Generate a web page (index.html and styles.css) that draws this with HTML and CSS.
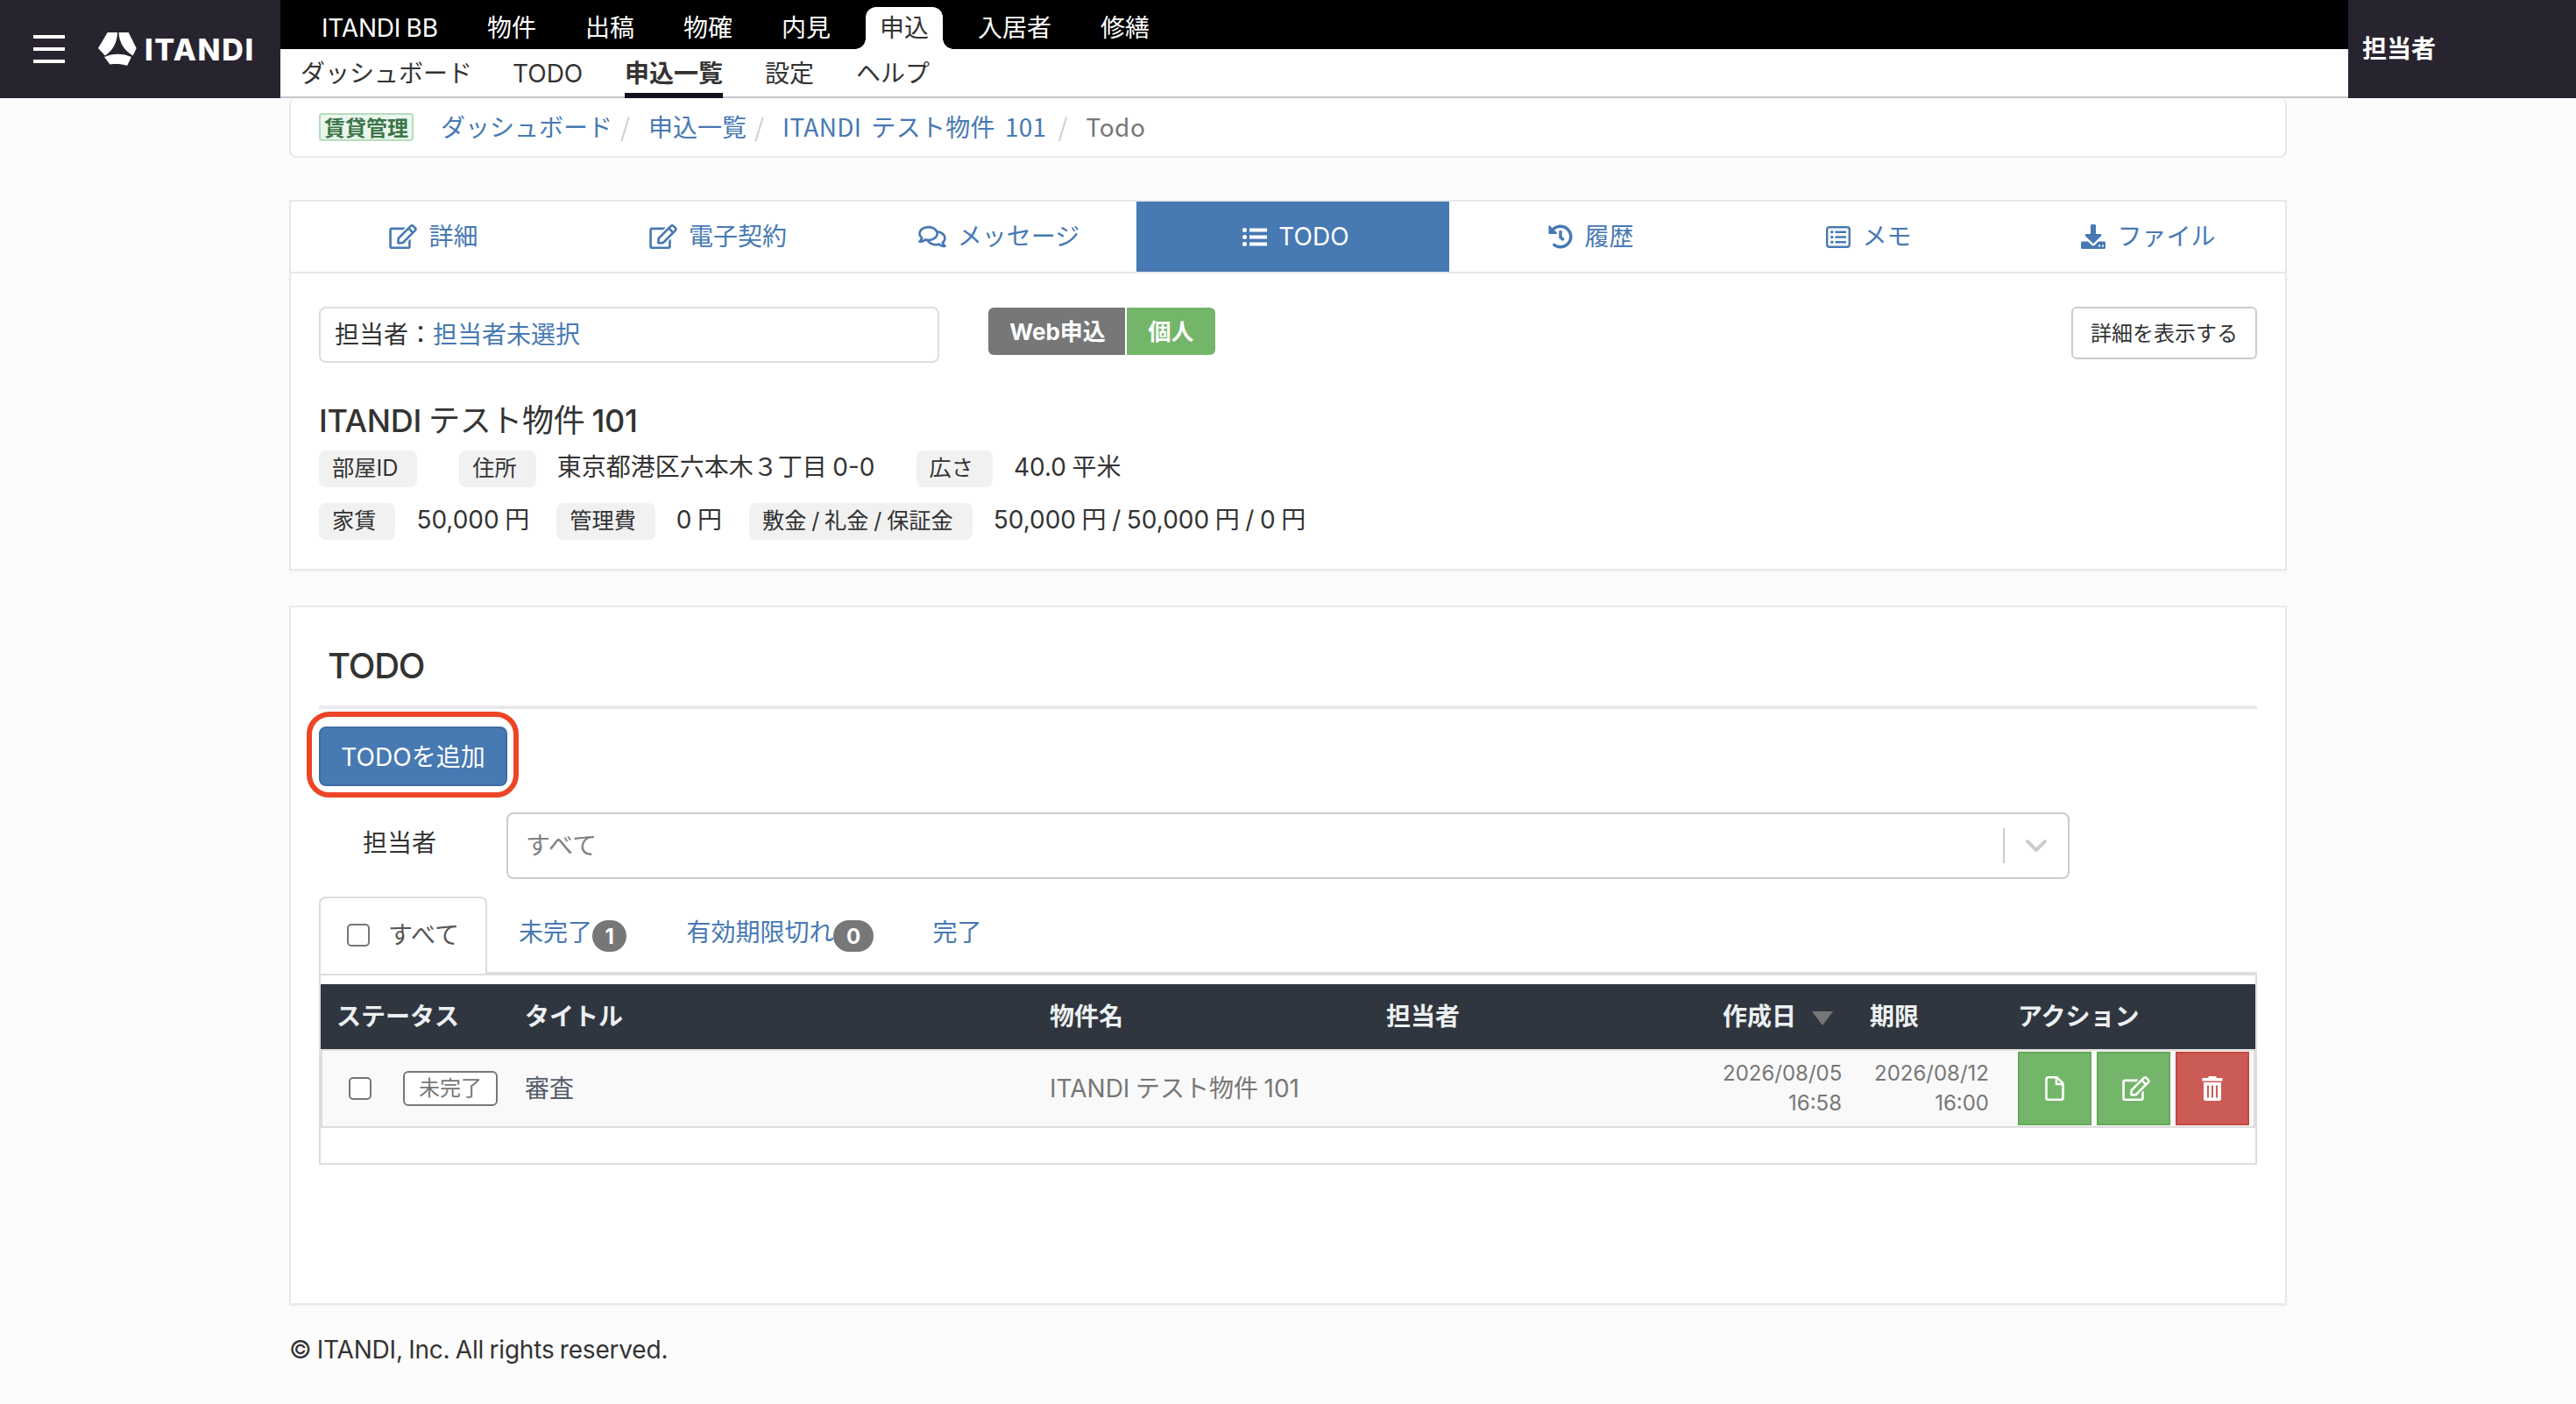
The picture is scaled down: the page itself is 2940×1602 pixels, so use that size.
FILE: index.html
```html
<!DOCTYPE html>
<html lang="ja">
<head>
    <meta charset="UTF-8">
    <title>TODO | ITANDI 申込</title>
    <link rel="stylesheet" href="styles.css">
</head>
<body>
    <svg class="sprite" aria-hidden="true">
        <symbol id="icon-edit" viewBox="0 0 576 512"><path d="M402.3 344.9l32-32c5-5 13.7-1.5 13.7 5.7V464c0 26.5-21.5 48-48 48H48c-26.5 0-48-21.5-48-48V112c0-26.5 21.5-48 48-48h273.5c7.1 0 10.7 8.6 5.7 13.7l-32 32c-1.5 1.5-3.5 2.3-5.7 2.3H48v352h352V350.5c0-2.1.8-4.1 2.3-5.6zm156.6-201.8L296.3 405.7l-90.4 10c-26.2 2.9-48.5-19.2-45.6-45.6l10-90.4L432.9 17.1c22.9-22.9 59.9-22.9 82.7 0l43.2 43.2c22.9 22.9 22.9 60 .1 82.8zM460.1 174L402 115.9 216.2 301.8l-7.3 65.3 65.3-7.3L460.1 174zm64.8-79.7l-43.2-43.2c-4.1-4.1-10.8-4.1-14.8 0L436 82l58.1 58.1 30.9-30.9c4-4.2 4-10.8-.1-14.9z"/></symbol>
        <symbol id="icon-comments" viewBox="0 0 576 512"><path d="M532 386.2c27.5-27.1 44-61.1 44-98.2 0-80-76.5-146.1-176.2-157.9C368.3 72.5 294.3 32 208 32 93.1 32 0 103.6 0 192c0 37 16.5 71 44 98.2-15.3 30.7-37.3 54.5-37.7 54.9-6.3 6.7-8.1 16.5-4.4 25 3.6 8.5 12 14 21.2 14 53.5 0 96.7-20.2 125.2-38.8 9.2 2.1 18.7 3.7 28.4 4.9C208.1 407.6 281.8 448 368 448c20.8 0 40.8-2.4 59.8-6.8C456.3 459.7 499.4 480 553 480c9.2 0 17.5-5.5 21.2-14 3.6-8.5 1.9-18.3-4.4-25-.4-.3-22.5-24.1-37.8-54.8zm-392.8-92.3L122.1 305c-14.1 9.1-28.5 16.3-43.1 21.4 2.7-4.7 5.4-9.7 8-14.8l15.5-31.1L77.7 256C64.2 242.6 48 220.7 48 192c0-60.7 73.3-112 160-112s160 51.3 160 112-73.3 112-160 112c-16.5 0-33-1.9-49-5.6l-19.8-4.5zM498.3 352l-24.7 24.4 15.5 31.1c2.6 5.1 5.3 10.1 8 14.8-14.6-5.1-29-12.3-43.1-21.4l-17.1-11.1-19.9 4.6c-16 3.7-32.5 5.6-49 5.6-54 0-102.2-20.1-131.3-49.7C338 339.5 416 272.9 416 192c0-3.4-.4-6.7-.7-10C479.7 196.5 528 238.8 528 288c0 28.7-16.2 50.6-29.7 64z"/></symbol>
        <symbol id="icon-list" viewBox="0 0 28 28"><path d="M8 4.500h20v4H8zM8 12.500h20v4H8zM8 20.500h20v4H8z"/><circle cx="2.500" cy="6.500" r="2.500"/><circle cx="2.500" cy="14.500" r="2.500"/><circle cx="2.500" cy="22.500" r="2.500"/></symbol>
        <symbol id="icon-history" viewBox="0 0 512 512"><path d="M504 255.531c.253 136.64-111.18 248.372-247.82 248.468-59.015.042-113.223-20.53-155.822-54.911-11.077-8.94-11.905-25.541-1.839-35.607l11.267-11.267c8.609-8.609 22.353-9.551 31.891-1.984C173.062 425.135 212.781 440 256 440c101.705 0 184-82.311 184-184 0-101.705-82.311-184-184-184-48.814 0-93.149 18.969-126.068 49.932l50.754 50.754c10.08 10.08 2.941 27.314-11.313 27.314H24c-8.837 0-16-7.163-16-16V38.627c0-14.254 17.234-21.393 27.314-11.314l49.372 49.372C129.209 34.136 189.552 8 256 8c136.81 0 247.747 110.78 248 247.531zm-180.912 78.784l9.823-12.63c8.138-10.463 6.253-25.542-4.21-33.679L288 256.349V152c0-13.255-10.745-24-24-24h-16c-13.255 0-24 10.745-24 24v135.651l65.409 50.874c10.463 8.137 25.541 6.253 33.679-4.21z"/></symbol>
        <symbol id="icon-list-alt" viewBox="0 0 28 28"><rect x="1.200" y="3.200" width="25.600" height="22.600" rx="2.500" fill="none" stroke="currentColor" stroke-width="2.400"/><path d="M10.500 7.500H23v2.500H10.500zM10.500 13.200H23v2.500H10.500zM10.500 18.900H23v2.500H10.500z"/><circle cx="6.800" cy="8.800" r="1.700"/><circle cx="6.800" cy="14.500" r="1.700"/><circle cx="6.800" cy="20.200" r="1.700"/></symbol>
        <symbol id="icon-download" viewBox="0 0 28 28"><path d="M11 1.500c0-.8.700-1.500 1.500-1.500h3c.8 0 1.500.7 1.500 1.500V11h5c1.200 0 1.800 1.400 1 2.200l-8.300 8.300a1 1 0 0 1-1.400 0L5 13.200c-.8-.8-.2-2.200 1-2.200h5z"/><path d="M1.500 19.500H8l4 4a2.800 2.800 0 0 0 4 0l4-4h6.500c.8 0 1.500.7 1.500 1.500v5.500c0 .8-.7 1.500-1.500 1.500h-25c-.8 0-1.500-.7-1.500-1.500V21c0-.8.700-1.500 1.500-1.500zM20 23.500v2h2v-2zM24 23.500v2h2v-2z" fill-rule="evenodd"/></symbol>
        <symbol id="icon-file" viewBox="0 0 28 28"><path d="M5.500 1.300h10.200l6.800 6.800v16.600a2 2 0 0 1-2 2h-15a2 2 0 0 1-2-2V3.300a2 2 0 0 1 2-2zM15 1.500V9h7.500" fill="none" stroke="currentColor" stroke-width="2.600" stroke-linejoin="round" transform="translate(1)"/></symbol>
        <symbol id="icon-trash" viewBox="0 0 28 28"><path d="M2.500 2h6.500l1-2h8l1 2h6.500v3.500h-23zM4 7h20v18.500a2.500 2.500 0 0 1-2.500 2.500h-15A2.500 2.500 0 0 1 4 25.500zM8 10.500v14h2v-14zM13 10.500v14h2v-14zM18 10.500v14h2v-14z" fill-rule="evenodd"/></symbol>
    </svg>

    <header class="header">
        <div class="brand">
            <div class="menu-icon"><span></span><span></span><span></span></div>
            <svg class="brand-mark" viewBox="0 0 44 38">
                <path d="M10.700 0H22c0 11-5 20-14 26.500L0 18z"/>
                <path d="M23.500 0h11.200l9 18-4 8.500C29 20 24 11 23.500 0z"/>
                <path d="M7 28c9-4.500 22-4.500 31 0l-5 10c-6-2-13-2.500-19.500-1.500z"/>
            </svg>
            <span class="brand-name">ITANDI</span>
        </div>
        <div class="navs">
            <nav class="main-nav">
                <a class="wide-item">ITANDI BB</a>
                <a>物件</a>
                <a>出稿</a>
                <a>物確</a>
                <a>内見</a>
                <a class="active">申込</a>
                <a>入居者</a>
                <a>修繕</a>
            </nav>
            <nav class="sub-nav">
                <a>ダッシュボード</a>
                <a class="latin">TODO</a>
                <a class="active">申込一覧</a>
                <a>設定</a>
                <a>ヘルプ</a>
            </nav>
        </div>
        <div class="user">担当者</div>
    </header>

    <main class="container">
        <div class="breadcrumb">
            <span class="role">賃貸管理</span>
            <a>ダッシュボード</a>
            <i>/</i>
            <a>申込一覧</a>
            <i>/</i>
            <a class="room">ITANDI テスト物件 101</a>
            <i>/</i>
            <span class="current">Todo</span>
        </div>

        <section class="card">
            <div class="card-tabs">
                <a><svg class="icon icon-wide"><use href="#icon-edit"/></svg>詳細</a>
                <a><svg class="icon icon-wide"><use href="#icon-edit"/></svg>電子契約</a>
                <a><svg class="icon icon-wide"><use href="#icon-comments"/></svg>メッセージ</a>
                <a class="active"><svg class="icon"><use href="#icon-list"/></svg>TODO</a>
                <a><svg class="icon"><use href="#icon-history"/></svg>履歴</a>
                <a><svg class="icon"><use href="#icon-list-alt"/></svg>メモ</a>
                <a><svg class="icon"><use href="#icon-download"/></svg>ファイル</a>
            </div>
            <div class="summary">
                <div class="summary-top">
                    <div class="assignee">担当者：<a>担当者未選択</a></div>
                    <div class="kind">
                        <span class="kind-web">Web申込</span>
                        <span class="kind-person">個人</span>
                    </div>
                    <button class="btn-default">詳細を表示する</button>
                </div>
                <h2>ITANDI <span>テスト物件</span> 101</h2>
                <div class="specs">
                    <span class="chip">部屋ID</span>
                    <span class="value empty"></span>
                    <span class="chip">住所</span>
                    <span class="value address">東京都港区六本木３丁目 0-0</span>
                    <span class="chip">広さ</span>
                    <span class="value">40.0 平米</span>
                </div>
                <div class="specs">
                    <span class="chip">家賃</span>
                    <span class="value">50,000 円</span>
                    <span class="chip">管理費</span>
                    <span class="value">0 円</span>
                    <span class="chip">敷金 / 礼金 / 保証金</span>
                    <span class="value">50,000 円 / 50,000 円 / 0 円</span>
                </div>
            </div>
        </section>

        <section class="card todo">
            <h1>TODO</h1>
            <button class="btn-primary">TODOを追加</button>
            <div class="filter">
                <label>担当者</label>
                <div class="select">
                    <span>すべて</span>
                    <svg class="chevron" viewBox="0 0 24 16"><path d="M2 3l10 10L22 3"/></svg>
                </div>
            </div>
            <div class="status-tabs">
                <a class="active"><span class="checkbox"></span>すべて</a>
                <a>未完了<b>1</b></a>
                <a>有効期限切れ<b>0</b></a>
                <a>完了</a>
            </div>
            <div class="panel">
                <div class="row head">
                    <div>ステータス</div>
                    <div>タイトル</div>
                    <div>物件名</div>
                    <div>担当者</div>
                    <div>作成日<span class="sort"></span></div>
                    <div>期限</div>
                    <div>アクション</div>
                </div>
                <div class="row item">
                    <div class="status"><span class="checkbox"></span><span class="badge">未完了</span></div>
                    <div class="title">審査</div>
                    <div>ITANDI テスト物件 101</div>
                    <div></div>
                    <div class="date">2026/08/05<br>16:58</div>
                    <div class="date">2026/08/12<br>16:00</div>
                    <div class="actions">
                        <button class="green"><svg class="icon"><use href="#icon-file"/></svg></button>
                        <button class="green"><svg class="icon icon-wide icon-shift"><use href="#icon-edit"/></svg></button>
                        <button class="red"><svg class="icon"><use href="#icon-trash"/></svg></button>
                    </div>
                </div>
            </div>
        </section>

        <footer>© ITANDI, Inc. All rights reserved.</footer>
    </main>
</body>
</html>
```
FILE: styles.css
```css
* {
    box-sizing: border-box;
}
body {
    margin: 0;
    background-color: #fcfcfc;
    color: #333;
    font-family: Inter, 'Noto Sans CJK JP', sans-serif;
    font-size: 28px;
    line-height: 40px;
    word-spacing: -1.3px;
}
a {
    color: #4779b3;
    text-decoration: none;
}
button {
    font-family: inherit;
    padding: 0;
}
.sprite {
    display: none;
}
.icon {
    width: 28px;
    height: 28px;
    fill: currentColor;
    flex: none;
}
.icon-wide {
    width: 32px;
}
.icon-shift {
    margin-left: 6px;
}

/* header */
.header {
    display: flex;
    height: 112px;
}
.brand {
    display: flex;
    align-items: center;
    width: 320px;
    padding-left: 38px;
    background-color: #28242f;
    color: #fff;
}
.menu-icon {
    display: flex;
    flex-direction: column;
    gap: 10px;
    width: 36px;
}
.menu-icon span {
    height: 4px;
    background-color: #fff;
}
.brand-mark {
    width: 44px;
    height: 38px;
    margin: 0 9px 0 38px;
    fill: #fff;
}
.brand-name {
    padding-top: 2px;
    font-size: 34px;
    font-weight: 800;
    letter-spacing: 1.6px;
    white-space: nowrap;
}
.navs {
    flex: 1;
    border-bottom: 2px solid #c5c4cb;
    background-color: #fff;
}
.main-nav {
    display: flex;
    height: 56px;
    padding-left: 18px;
    background-color: #000;
}
.main-nav a {
    padding: 12px 28px 0;
    color: #fff;
}
.main-nav .wide-item {
    width: 190px;
    padding-left: 29px;
    letter-spacing: -0.2px;
    white-space: nowrap;
}
.main-nav .active {
    position: relative;
    margin: 8px 12px 0;
    padding: 4px 16px 0;
    border-radius: 12px 12px 0 0;
    background-color: #fff;
    color: #333;
}
.main-nav .active::before,
.main-nav .active::after {
    content: '';
    position: absolute;
    bottom: 0;
    width: 12px;
    height: 12px;
}
.main-nav .active::before {
    left: -12px;
    background: radial-gradient(circle at 0 0, #000 11.5px, #fff 12px);
}
.main-nav .active::after {
    right: -12px;
    background: radial-gradient(circle at 100% 0, #000 11.5px, #fff 12px);
}
.sub-nav {
    display: flex;
    gap: 48px;
    height: 56px;
    padding-left: 23px;
}
.sub-nav a {
    padding-top: 8px;
    color: #333;
}
.sub-nav .latin {
    width: 80px;
    margin-left: -2px;
}
.sub-nav .active {
    border-bottom: 6px solid #151020;
    font-weight: 700;
}
.user {
    width: 260px;
    padding: 36px 16px;
    background-color: #28242f;
    color: #fff;
    font-weight: 700;
}

/* breadcrumb */
.container {
    width: 2280px;
    margin: 0 auto;
}
.breadcrumb {
    display: flex;
    align-items: center;
    height: 68px;
    padding: 0 0 3px 32px;
    border: 2px solid #e8e8ed;
    border-top: 0;
    border-radius: 8px;
    background-color: #fff;
    font-family: 'Noto Sans CJK JP', sans-serif;
}
.breadcrumb .role {
    height: 32px;
    margin: 2px 31px 0 0;
    padding: 0 4px;
    border: 2px solid #b6dcbb;
    border-radius: 4px;
    background-color: #eaf7ed;
    color: #3c7549;
    font-size: 24px;
    font-weight: 700;
    line-height: 27px;
}
.breadcrumb i {
    width: 41px;
    padding-left: 9px;
    color: #ccc;
    font-style: normal;
}
.breadcrumb .room {
    margin-right: 4px;
    letter-spacing: 0.3px;
    word-spacing: 4.5px;
}
.breadcrumb .current {
    color: #777;
    letter-spacing: 0.5px;
}

/* cards */
.card {
    margin-top: 48px;
    border: 2px solid #e8e8ed;
    background-color: #fff;
    box-shadow: 0 2px 2px rgba(0, 0, 0, 0.03);
}
.card-tabs {
    display: grid;
    grid-template-columns: 324px 325px 316px 357px 322px 312px 1fr;
    height: 82px;
    border-bottom: 2px solid #e8e8ed;
}
.card-tabs a {
    display: flex;
    align-items: center;
    justify-content: center;
    gap: 13px;
    padding-left: 2px;
}
.card-tabs a:last-child {
    padding-left: 8px;
}
.card-tabs .active {
    padding-left: 7px;
    background-color: #4779b3;
    color: #fff;
}
.summary {
    height: 337px;
    padding: 38px 32px 0;
}
.summary-top {
    display: flex;
    align-items: flex-start;
}
.assignee {
    width: 708px;
    height: 64px;
    padding: 10px 16px;
    border: 2px solid #ddd;
    border-radius: 8px;
}
.kind {
    display: flex;
    gap: 2px;
    margin: 1px auto 0 56px;
    color: #fff;
    font-size: 26px;
    font-weight: 700;
    line-height: 55px;
    text-align: center;
}
.kind span {
    height: 54px;
}
.kind-web {
    width: 156px;
    padding-left: 2px;
    border-radius: 6px 0 0 6px;
    background-color: #777;
}
.kind-person {
    width: 101px;
    border-radius: 0 6px 6px 0;
    background-color: #74b669;
}
.btn-default {
    width: 212px;
    height: 60px;
    padding-bottom: 3px;
    border: 2px solid #ccc;
    border-radius: 6px;
    background-color: #fff;
    color: #333;
    font-size: 24px;
}
.summary h2 {
    margin: 41px 0 9px;
    font-size: 36px;
    font-weight: 500;
    letter-spacing: -0.3px;
    line-height: 50px;
}
.summary h2 span {
    font-weight: 400;
}
.specs {
    display: flex;
    height: 60px;
}
.chip {
    height: 42px;
    padding: 0 22px 0 15px;
    border-radius: 8px;
    background-color: #f1f1f1;
    font-size: 25.2px;
    line-height: 40px;
    white-space: nowrap;
}
.value {
    margin: 0 31px 0 24px;
    line-height: 38px;
    white-space: nowrap;
}
.value.empty {
    margin: 0 0 0 48px;
}
.value.address {
    margin-right: 47px;
}

/* todo list */
.todo {
    height: 798px;
    margin-top: 40px;
    padding: 0 32px;
}
.todo h1 {
    height: 116px;
    margin: 0 0 20px;
    padding: 42px 10px 0;
    border-bottom: 4px solid #e8e8ed;
    font-size: 40px;
    font-weight: 500;
    letter-spacing: -1.2px;
    line-height: 50px;
}
.btn-primary {
    position: relative;
    display: block;
    width: 215px;
    height: 68px;
    padding-bottom: 2px;
    border: 2px solid #3e6ca1;
    border-radius: 8px;
    background-color: #4779b3;
    color: #fff;
    font-size: 28px;
}
.btn-primary::after {
    content: '';
    position: absolute;
    inset: -19px -15px -15px -16px;
    border: 6px solid #ec4526;
    border-radius: 26px;
}
.filter {
    display: flex;
    margin-top: 30px;
}
.filter label {
    width: 214px;
    padding: 15px 50px 0;
}
.select {
    display: flex;
    align-items: center;
    width: 1784px;
    height: 76px;
    padding-left: 20px;
    border: 2px solid #ccc;
    border-radius: 8px;
    color: #808080;
}
.select span {
    flex: 1;
}
.chevron {
    box-sizing: content-box;
    width: 24px;
    height: 16px;
    padding: 12px 24px;
    border-left: 2px solid #ccc;
    fill: none;
    stroke: #ccc;
    stroke-width: 4;
    stroke-linecap: round;
    stroke-linejoin: round;
}
.status-tabs {
    display: flex;
    height: 88px;
    margin-top: 20px;
    box-shadow: inset 0 -2px #ddd;
}
.status-tabs a {
    display: flex;
    padding: 21px 32px 0 36px;
}
.status-tabs .active {
    align-items: center;
    width: 192px;
    padding: 0 0 2px 30px;
    border: 2px solid #ddd;
    border-bottom: 0;
    border-radius: 8px 8px 0 0;
    background-color: #fff;
    color: #555;
}
.status-tabs b {
    height: 36px;
    margin-top: 6px;
    padding: 0 14.5px;
    border-radius: 20px;
    background-color: #777;
    color: #fff;
    font-size: 24px;
    line-height: 37px;
}
.checkbox {
    width: 26px;
    height: 26px;
    margin-right: 21px;
    border: 2px solid #767676;
    border-radius: 5px;
    background-color: #fff;
}
.panel {
    height: 218px;
    padding-top: 10px;
    border: 2px solid #ddd;
}
.row {
    display: grid;
    grid-template-columns: 215px 599px 384px 384px 168px 169px 1fr;
    align-items: center;
}
.head {
    height: 74px;
    padding-left: 18px;
    background-color: #30363f;
    color: #ecf0f1;
    font-weight: 700;
}
.sort {
    display: inline-block;
    margin-left: 18px;
    border: solid transparent;
    border-width: 16px 12px 0;
    border-top-color: #777;
}
.item {
    height: 90px;
    padding-left: 16px;
    border: 2px solid #ddd;
    background-color: #f9f9f9;
    color: #777;
}
.status {
    display: flex;
    align-items: center;
    padding-left: 14px;
}
.status .checkbox {
    margin-right: 36px;
}
.badge {
    width: 108px;
    height: 40px;
    border: 2px solid #777;
    border-radius: 6px;
    background-color: #fff;
    font-size: 24px;
    line-height: 35px;
    text-align: center;
}
.title {
    color: #555b69;
}
.date {
    width: 136px;
    font-size: 24px;
    line-height: 34px;
    text-align: right;
}
.actions {
    display: flex;
    gap: 6px;
}
.actions button {
    display: flex;
    align-items: center;
    justify-content: center;
    width: 84px;
    height: 84px;
    border: 2px solid #65a95a;
    background-color: #74b669;
    color: #fff;
}
.actions .red {
    border-color: #c5463e;
    background-color: #cb5c55;
}
footer {
    margin-top: 31px;
    letter-spacing: -0.2px;
}
```
